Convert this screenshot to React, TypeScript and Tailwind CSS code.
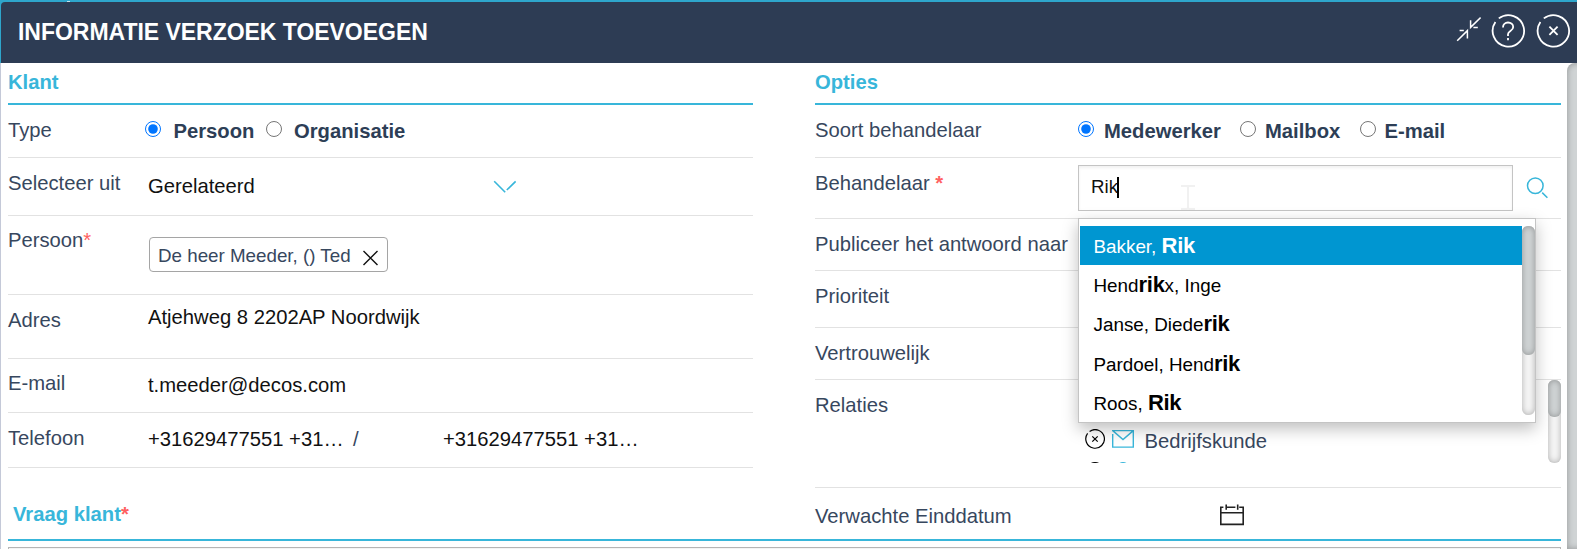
import type { ReactNode } from 'react';
import clsx from 'clsx';

interface RowProps {
  label: string;
  required?: ReactNode;
  className: string;
  labelClass: string;
  wide?: boolean;
  children?: ReactNode;
}

const SUGGESTIONS = [
  ['Bakker, ', 'Rik', ''],
  ['Hend', 'rik', 'x, Inge'],
  ['Janse, Diede', 'rik', ''],
  ['Pardoel, Hend', 'rik', ''],
  ['Roos, ', 'Rik', ''],
];

export default function App() {
  return (
    <div className="relative flex h-[549px] w-[1577px] flex-col overflow-hidden bg-[#2ea6cc] pt-0.5 font-['Liberation_Sans',Arial,sans-serif] text-[20.23px] leading-6 text-[#37475e]">
      <span className="absolute left-[67px] top-px h-px w-[3px] bg-[#c3e5f0]" />
      <Header />
      <div className="flex h-[486px]">
        <div className="w-px bg-[#c4c9d8]" />
        <div className="w-[1566px] bg-white pl-[7px]">
          <div className="flex h-[476px] gap-[62px]">
            <KlantColumn />
            <OptiesColumn />
          </div>
          <div className="h-0.5 w-[1553px] bg-[#38b6da]" />
          <div className="mt-1.5 h-5 w-[1553px] border border-[#b5b5b5] bg-[#f4f4f4]" />
        </div>
        <div className="w-2.5 bg-white">
          <div className="h-full w-5 rounded-tl-lg bg-[#cfd3d4] shadow-[inset_0_0_6px_rgba(0,0,0,0.3)]" />
        </div>
      </div>
    </div>
  );
}

function Header() {
  return (
    <header className="ml-px flex h-[61px] shrink-0 items-start rounded-tl-[4px] bg-[#2d3c54] pl-[17px]">
      <h1 className="pt-4 text-[23px] font-bold leading-7 tracking-[-0.03px] text-white">
        INFORMATIE VERZOEK TOEVOEGEN
      </h1>
      <div className="ml-auto flex gap-2.5 pr-[6px] pt-[12px] text-white">
        <svg className="h-[34px] w-[26px]" viewBox="0 0 26 34" fill="none" stroke="currentColor" strokeWidth="1.5">
          <path d="M25.6 3.5 15.6 13.4V6.2M18.4 13.4h4.4M2.2 26.8l10.2-10.2v7.8M4.6 16.6h4.2" />
        </svg>
        <svg className="h-[34px] w-[35px]" viewBox="0 0 35 34" fill="none" stroke="currentColor" strokeWidth="1.8">
          <path d="M7.8 4.4A15.7 15.7 0 1 1 4.4 8" />
          <path d="M12 13.4c0-3 2.1-4.9 5-4.9s5.2 1.9 5.2 4.6c0 4.1-5.2 3.8-5.2 7.2v1.6M17 24v2.2" />
        </svg>
        <svg className="h-[34px] w-[35px]" viewBox="0 0 35 34" fill="none" stroke="currentColor" strokeWidth="1.8">
          <path d="M7.8 4.4A15.7 15.7 0 1 1 4.4 8M13.4 12.7l8.2 8.2M21.6 12.7l-8.2 8.2" />
        </svg>
      </div>
    </header>
  );
}

function KlantColumn() {
  return (
    <section className="w-[745px]">
      <SectionTitle>Klant</SectionTitle>
      <Row label="Type" className="h-[53px]" labelClass="pt-[13px]">
        <div className="-ml-[3px] flex pt-[14px]">
          <Radio name="type" label="Persoon" checked gap="ml-[12.5px] w-[92.5px]" />
          <Radio name="type" label="Organisatie" gap="ml-3" />
        </div>
      </Row>
      <Row label="Selecteer uit" className="h-[58px]" labelClass="pt-[13px]">
        <div className="flex w-[368px] justify-between pt-4 text-[#111]">
          <span>Gerelateerd</span>
          <svg className="mt-[6px] h-[13px] w-[23px] text-[#38b6da]" viewBox="0 0 23 13" fill="none" stroke="currentColor" strokeWidth="1.6">
            <path d="M1.2 1.2l11 11M13.8 10l8.8-8.6" />
          </svg>
        </div>
      </Row>
      <Row
        label="Persoon"
        required={<span className="text-[#ff6161]">*</span>}
        className="h-[79px]"
        labelClass="pt-3"
      >
        <div className="ml-px mt-[21px] flex h-[35px] w-[239px] rounded-[4px] border border-[#a5a5a5] pl-2 pt-[6px] text-[18.78px]">
          <span className="whitespace-nowrap">De heer Meeder, () Ted</span>
          <svg className="ml-[11.5px] mt-[5.5px] size-4 text-[#111]" viewBox="0 0 16 16" fill="none" stroke="currentColor" strokeWidth="1.4">
            <path d="M1.5 1l14 14M15.5 1l-14 14" />
          </svg>
        </div>
      </Row>
      <Row label="Adres" className="h-16" labelClass="pt-[13px]">
        <span className="pt-[10px] text-[#111]">Atjehweg 8 2202AP Noordwijk</span>
      </Row>
      <Row label="E-mail" className="h-[54px]" labelClass="pt-3">
        <span className="pt-[14px] text-[#111]">t.meeder@decos.com</span>
      </Row>
      <Row label="Telefoon" className="h-[55px]" labelClass="pt-[13px]">
        <div className="flex pt-[14px] text-[#111]">
          <span className="w-[205px]">+31629477551 +31…</span>
          <span className="w-[90px] text-[#37475e]">/</span>
          <span>+31629477551 +31…</span>
        </div>
      </Row>
      <h2 className="pl-[5px] pt-[34px] font-bold text-[#38b6da]">
        Vraag klant<span className="text-[#ff6161]">*</span>
      </h2>
    </section>
  );
}

function OptiesColumn() {
  return (
    <section className="w-[746px]">
      <SectionTitle>Opties</SectionTitle>
      <Row wide label="Soort behandelaar" className="h-[53px]" labelClass="pt-[13px]">
        <div className="flex pt-[14px]">
          <Radio name="soort" label="Medewerker" checked gap="ml-[10px] w-[136px]" />
          <Radio name="soort" label="Mailbox" gap="ml-[9px] w-[95px]" />
          <Radio name="soort" label="E-mail" gap="ml-[8.5px]" />
        </div>
      </Row>
      <Row
        wide
        label="Behandelaar"
        required={<span className="ml-[5.5px] font-bold text-[#ff6161]">*</span>}
        className="h-[61px]"
        labelClass="pt-[13px]"
      >
        <div className="relative flex">
          <div className="mt-[7px] flex h-[46px] w-[435px] border border-[#c4c4c4] bg-white pl-3 pt-[9px] text-[18.75px] text-[#111] shadow-[inset_0_2px_3px_rgba(0,0,0,0.06)]">
            <span>Rik</span>
            <span className="-ml-px mt-0.5 h-[21px] w-0.5 bg-black" />
          </div>
          <svg className="ml-[13px] mt-[18px] h-6 w-6 text-[#38b6da]" viewBox="0 0 24 24" fill="none" stroke="currentColor" strokeWidth="1.5">
            <circle cx="9.3" cy="9.8" r="7.8" />
            <path d="M16.2 16.6l5.2 5.2" />
          </svg>
          {/* text cursor */}
          <svg className="absolute left-[103px] top-[27px] h-[25px] w-[14px] text-[#f1f1f1]" viewBox="0 0 14 25" fill="none" stroke="currentColor" strokeWidth="2">
            <path d="M0 1h6l1 1 1-1h6M7 2v21M0 24h6l1-1 1 1h6" />
          </svg>
          <Suggestions />
        </div>
      </Row>
      <Row wide label="Publiceer het antwoord naar" className="h-[52px]" labelClass="pt-[13px]" />
      <Row wide label="Prioriteit" className="h-[57px]" labelClass="pt-[13px]" />
      <Row wide label="Vertrouwelijk" className="h-[52px]" labelClass="pt-[13px]" />
      <Row wide label="Relaties" className="h-[108px]" labelClass="pt-[13px]">
        <div className="flex h-[83px] w-full justify-between overflow-hidden">
          <div className="flex flex-col pl-[7px] pt-[48px]">
            <div className="flex h-[33px] shrink-0">
              <svg className="mt-px size-5 text-black" viewBox="0 0 20 20" fill="none" stroke="currentColor" strokeWidth="1.2">
                <path d="M4.6 2.4A9.3 9.3 0 1 1 2.6 4.4M7.3 7.3l5.4 5.4M12.7 7.3l-5.4 5.4" />
              </svg>
              <svg className="ml-[7px] mt-px h-5 w-[22px] text-[#38b6da]" viewBox="0 0 22 20" fill="none" stroke="currentColor" strokeWidth="1.4">
                <path d="M.7 5v13.1h20.6V1.6H.7L11 10.6l10.3-9" />
              </svg>
              <span className="ml-[9.5px] mt-px pl-px">Bedrijfskunde</span>
            </div>
            <div className="flex shrink-0">
              <svg className="size-5 text-black" viewBox="0 0 20 20" fill="none" stroke="currentColor" strokeWidth="1.2">
                <circle cx="10" cy="10.7" r="9" />
              </svg>
              <svg className="ml-2 size-5 text-[#38b6da]" viewBox="0 0 20 20" fill="none" stroke="currentColor" strokeWidth="1.3">
                <circle cx="10" cy="7.7" r="6" />
              </svg>
            </div>
          </div>
          <Scrollbar thumb="h-[37px]" />
        </div>
      </Row>
      <div className="flex pt-4">
        <span className="w-[405px]">Verwachte Einddatum</span>
        <svg className="h-[22px] w-6 text-[#222]" viewBox="0 0 24 22" fill="none" stroke="currentColor" strokeWidth="1.6">
          <path d="M3.4 3.2H.8v17.2h22.4V3.2h-4M6.4 3.2h9M6.2.5v5.2M17.7.5v5.2M1 8.8h22" />
        </svg>
      </div>
    </section>
  );
}

function Suggestions() {
  return (
    <div className="absolute left-0 top-[60px] z-10 flex h-[205px] w-[458px] border border-[#c4c4c4] bg-white py-[7px] pl-px text-[18.85px] text-black shadow-[0_6px_15px_rgba(0,0,0,0.25)]">
      <ul className="w-[442px]">
        {SUGGESTIONS.map(([before, match, after], i) => (
          <li
            key={before}
            className={clsx(
              'h-[39.2px] whitespace-pre pl-[13.5px] pt-2',
              i === 0 && 'bg-[#0096d1] text-white',
            )}
          >
            {before}
            <b className="text-[22px] tracking-[-0.3px]">{match}</b>
            {after}
          </li>
        ))}
      </ul>
      <Scrollbar thumb="h-[129px]" />
    </div>
  );
}

function Scrollbar({ thumb }: { thumb: string }) {
  return (
    <div className="h-full w-[13px] shrink-0 rounded-md bg-[#f5f5f5] shadow-[inset_0_0_6px_rgba(0,0,0,0.3)]">
      <div className={clsx('rounded-md bg-[#cfd3d4] shadow-[inset_0_0_6px_rgba(0,0,0,0.3)]', thumb)} />
    </div>
  );
}

function SectionTitle({ children }: { children: ReactNode }) {
  return (
    <h2 className="h-[42px] border-b-2 border-[#38b6da] pt-[7px] font-bold text-[#38b6da]">
      {children}
    </h2>
  );
}

function Row({ label, required, className, labelClass, wide, children }: RowProps) {
  return (
    <div className={clsx('flex border-b border-[#e2e2e2]', className)}>
      <div className={clsx('shrink-0 whitespace-nowrap', wide ? 'w-[263px]' : 'w-[140px]', labelClass)}>
        {label}
        {required}
      </div>
      {children}
    </div>
  );
}

function Radio({ name, label, checked, gap }: { name: string; label: string; checked?: boolean; gap: string }) {
  return (
    <label className="flex font-bold text-[#2d3e56]">
      <input type="radio" name={name} defaultChecked={checked} className="mt-0.5 size-4" />
      <span className={gap}>{label}</span>
    </label>
  );
}
